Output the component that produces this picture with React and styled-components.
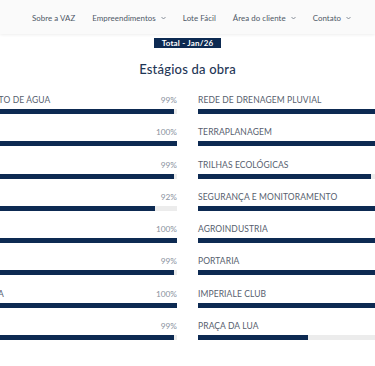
import React from "react";
import styled, { createGlobalStyle } from "styled-components";

const Global = createGlobalStyle`
  html, body { margin: 0; padding: 0; background: #ffffff; }
  body { overflow: hidden; font-family: Lato, "Open Sans", "Liberation Sans", sans-serif; }
  #root { width: 375px; height: 366px; overflow: hidden; }
`;

const Header = styled.header`
  height: 34px;
  background: #fafafa;
  box-shadow: 0 1px 3px rgba(0, 0, 0, 0.07);
  display: flex;
  align-items: center;
  position: relative;
  z-index: 1;
`;

const Nav = styled.nav`
  display: flex;
  align-items: center;
  gap: 17px;
  padding-left: 32px;
  padding-top: 1px;
`;

const NavItem = styled.span`
  display: inline-flex;
  align-items: center;
  gap: 5px;
  font-size: 7.9px;
  color: #4e5866;
  white-space: nowrap;
  letter-spacing: 0.05px;
`;

const Chevron = () => (
  <svg width="5" height="4" viewBox="0 0 5 4" fill="none">
    <path d="M0.5 1 L2.5 3 L4.5 1" stroke="#6b7380" strokeWidth="0.8" />
  </svg>
);

const Main = styled.main`
  display: flex;
  flex-direction: column;
  align-items: center;
`;

const Badge = styled.div`
  margin-top: 4px;
  height: 10px;
  line-height: 10px;
  padding: 0 8px;
  background: #0d2a52;
  color: #ffffff;
  font-size: 8px;
  font-weight: 700;
  letter-spacing: 0.2px;
`;

const Title = styled.h2`
  margin: 13px 0 0;
  font-size: 13px;
  line-height: 16px;
  font-weight: 500;
  color: #1f3656;
  letter-spacing: 0.2px;
`;

const GridWrap = styled.div`
  width: 375px;
  display: flex;
  justify-content: center;
  overflow: hidden;
  margin-top: 18px;
`;

const Grid = styled.div`
  flex: none;
  width: 573px;
  display: grid;
  grid-template-columns: 276px 276px;
  column-gap: 21px;
`;

const Column = styled.div`
  display: flex;
  flex-direction: column;
  gap: 13.3px;
`;

const Row = styled.div`
  display: flex;
  flex-direction: column;
  gap: 4px;
`;

const LabelLine = styled.div`
  display: flex;
  justify-content: space-between;
  align-items: center;
  height: 10px;
`;

const Label = styled.span`
  font-size: 8.5px;
  line-height: 10px;
  color: #56606e;
  text-transform: uppercase;
  white-space: nowrap;
  letter-spacing: 0.1px;
`;

const Pct = styled.span`
  font-size: 8.3px;
  line-height: 10px;
  color: #8a929e;
`;

const Track = styled.div`
  height: 5px;
  background: #ececec;
`;

const Fill = styled.div`
  height: 100%;
  background: #0d2a52;
`;

const left = [
  ["Rede de abastecimento de água", 99],
  ["Rede de esgoto", 100],
  ["Pavimentação", 99],
  ["Iluminação pública", 92],
  ["Meio-fio e sarjeta", 100],
  ["Rede elétrica", 99],
  ["Praça de convivência", 100],
  ["Paisagismo", 99],
];

const right = [
  ["Rede de drenagem pluvial", 100],
  ["Terraplanagem", 100],
  ["Trilhas ecológicas", 62.8],
  ["Segurança e monitoramento", 100],
  ["Agroindustria", 100],
  ["Portaria", 100],
  ["Imperiale Club", 100],
  ["Praça da Lua", 40],
];

const Stage = ({ name, value }) => (
  <Row>
    <LabelLine>
      <Label>{name}</Label>
      <Pct>{Math.round(value)}%</Pct>
    </LabelLine>
    <Track>
      <Fill style={{ width: `${value}%` }} />
    </Track>
  </Row>
);

export default function App() {
  return (
    <>
      <Global />
      <Header>
        <Nav>
          <NavItem>Sobre a VAZ</NavItem>
          <NavItem>Empreendimentos <Chevron /></NavItem>
          <NavItem>Lote Fácil</NavItem>
          <NavItem>Área do cliente <Chevron /></NavItem>
          <NavItem>Contato <Chevron /></NavItem>
        </Nav>
      </Header>
      <Main>
        <Badge>Total - Jan/26</Badge>
        <Title>Estágios da obra</Title>
        <GridWrap>
          <Grid>
            <Column>
              {left.map(([n, v]) => (
                <Stage key={n} name={n} value={v} />
              ))}
            </Column>
            <Column>
              {right.map(([n, v]) => (
                <Stage key={n} name={n} value={v} />
              ))}
            </Column>
          </Grid>
        </GridWrap>
      </Main>
    </>
  );
}
